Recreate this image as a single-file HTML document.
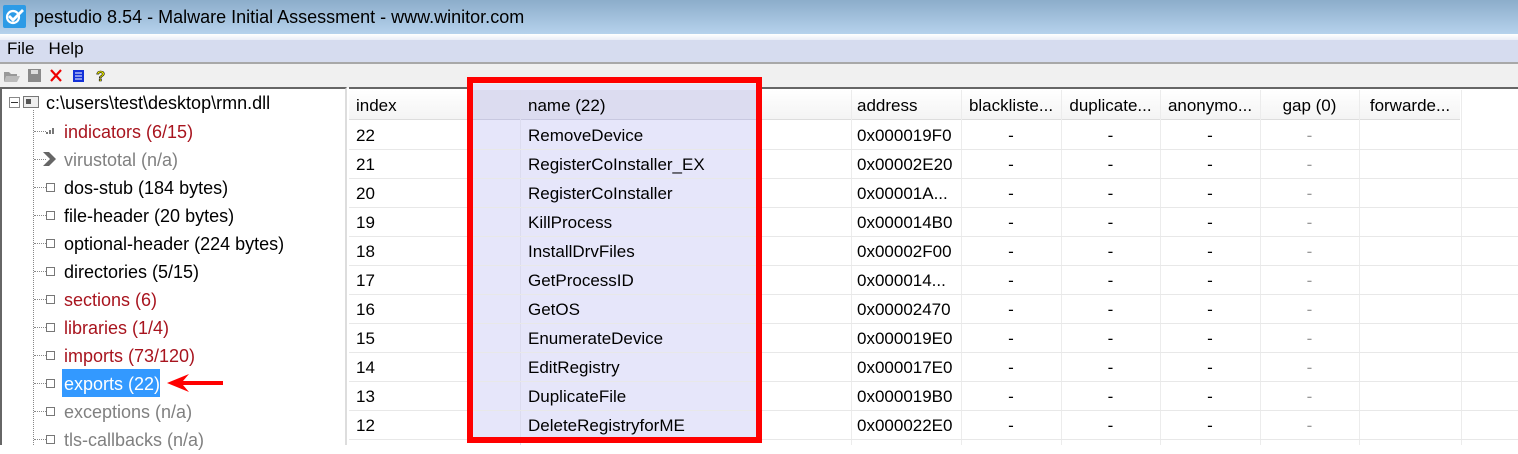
<!DOCTYPE html>
<html><head><meta charset="utf-8"><style>
*{margin:0;padding:0;box-sizing:border-box}
body{width:1518px;height:445px;overflow:hidden;background:#fff;font-family:"Segoe UI","Liberation Sans",sans-serif;font-size:17px;color:#000;position:relative}
.a{position:absolute;white-space:nowrap}
#title{left:0;top:0;width:1518px;height:34px;background:linear-gradient(#8cadca,#b6d2ec)}
#strip{left:0;top:34px;width:1518px;height:8px;background:linear-gradient(#fff,#e4e8f5)}
#menu{left:0;top:40px;width:1518px;height:22px;background:#d6dcef}
#tb{left:0;top:62px;width:1518px;height:26px;background:#f0f0f0;border-top:2px solid #a8a8a8}
#tree{left:0;top:87px;width:347px;height:358px;border-top:2px solid #666;border-left:2px solid #666;border-right:2px solid #ddd;background:#fff}
#tablebg{left:349px;top:87px;width:1169px;height:358px;border-top:2px solid #666;background:#fff}
.hl{left:349px;width:1169px;height:1px;background:#e8e8e8}
.vl{width:1px;background:#ececec}
.ti{left:64px;line-height:28px;font-size:18px}
.red{color:#a8141e}.gray{color:#808080}
.bx{left:46px;width:9px;height:9px;border:1px solid #777;background:#fff}
.dot{left:34px;width:12px;border-top:1px dotted #888}
.c{text-align:center}
</style></head><body>
<div class="a" id="title"></div>
<div class="a" style="left:3px;top:5px;width:23px;height:23px;background:#2d9be6;border-radius:2px"></div>
<svg class="a" style="left:5px;top:8px" width="20" height="17"><circle cx="8" cy="9" r="6" fill="none" stroke="#fff" stroke-width="2.2"/><path d="M4 8 L8 12 L18 2" fill="none" stroke="#fff" stroke-width="2.8"/></svg>
<div class="a" style="left:34px;top:5px;font-size:18px;line-height:24px">pestudio 8.54 - Malware Initial Assessment - www.winitor.com</div>
<div class="a" id="strip"></div>
<div class="a" id="menu"></div>
<div class="a" style="left:7px;top:38px;line-height:22px">File&nbsp;&nbsp; Help</div>
<div class="a" id="tb"></div>
<svg class="a" style="left:3px;top:67px" width="110" height="16">
<path d="M1 5h5l2 2h6v7H1z" fill="#999"/><path d="M3 9h14l-3 6H1z" fill="#bbb"/>
<rect x="25" y="2" width="13" height="13" fill="#8a8a8a"/><rect x="28" y="3" width="7" height="4" fill="#ddd"/>
<path d="M48 3l10 11M58 3l-10 11" stroke="#e00" stroke-width="2.2"/>
<rect x="70" y="3" width="11" height="12" fill="#1330d8"/><path d="M72 6h7M72 9h7M72 12h7" stroke="#fff" stroke-width="1"/>
<text x="93" y="14" font-size="15" font-weight="bold" fill="#ee0" stroke="#000" stroke-width=".6">?</text>
</svg>
<div class="a" id="tree"></div>
<div class="a" style="left:9px;top:97px;width:11px;height:11px;border:1px solid #888;background:#fff"></div>
<div class="a" style="left:11px;top:102px;width:7px;height:1px;background:#333"></div>
<div class="a" style="left:23px;top:96px;width:16px;height:12px;border:1px solid #777;background:#eee"></div>
<div class="a" style="left:26px;top:99px;width:5px;height:5px;background:#555"></div>
<div class="a" style="left:46px;top:89px;line-height:28px;font-size:18px">c:\users\test\desktop\rmn.dll</div>
<div class="a" style="left:33px;top:110px;height:335px;border-left:1px dotted #888"></div>
<div class="a dot" style="top:131px"></div><svg class="a" style="left:46px;top:125px" width="10" height="10"><rect x="0" y="7" width="2" height="2" fill="#777"/><rect x="3" y="5" width="2" height="4" fill="#777"/><rect x="6" y="3" width="2" height="6" fill="#777"/></svg>
<div class="a ti red" style="top:118px">indicators (6/15)</div>
<div class="a dot" style="top:159px"></div><svg class="a" style="left:43px;top:152px" width="16" height="14"><path d="M0 0h6l7 7-7 7H0l7-7z" fill="#666"/></svg>
<div class="a ti gray" style="top:146px">virustotal (n/a)</div>
<div class="a dot" style="top:187px"></div><div class="a bx" style="top:183px"></div><div class="a ti" style="top:174px">dos-stub (184 bytes)</div>
<div class="a dot" style="top:215px"></div><div class="a bx" style="top:211px"></div><div class="a ti" style="top:202px">file-header (20 bytes)</div>
<div class="a dot" style="top:243px"></div><div class="a bx" style="top:239px"></div><div class="a ti" style="top:230px">optional-header (224 bytes)</div>
<div class="a dot" style="top:271px"></div><div class="a bx" style="top:267px"></div><div class="a ti" style="top:258px">directories (5/15)</div>
<div class="a dot" style="top:299px"></div><div class="a bx" style="top:295px"></div><div class="a ti red" style="top:286px">sections (6)</div>
<div class="a dot" style="top:327px"></div><div class="a bx" style="top:323px"></div><div class="a ti red" style="top:314px">libraries (1/4)</div>
<div class="a dot" style="top:355px"></div><div class="a bx" style="top:351px"></div><div class="a ti red" style="top:342px">imports (73/120)</div>
<div class="a dot" style="top:383px"></div><div class="a bx" style="top:379px"></div><div class="a" style="left:62px;top:369px;width:98px;height:28px;background:#3399ff"></div><div class="a ti" style="top:370px;color:#fff">exports (22)</div>
<svg class="a" style="left:165px;top:372px" width="62" height="22"><path d="M2 11 L24 2 L18 9 L58 9 L58 13 L18 13 L24 20Z" fill="#f00"/></svg>
<div class="a dot" style="top:411px"></div><div class="a bx" style="top:407px"></div><div class="a ti gray" style="top:398px">exceptions (n/a)</div>
<div class="a dot" style="top:439px"></div><div class="a bx" style="top:435px"></div><div class="a ti gray" style="top:426px">tls-callbacks (n/a)</div>

<div class="a" id="tablebg"></div>
<div class="a" style="left:349px;top:90px;width:1111px;height:30px;background:linear-gradient(#fff,#f4f4f4);border-bottom:1px solid #ddd"></div>
<div class="a" style="left:473px;top:84px;width:283px;height:355px;background:#e6e6fa"></div>
<div class="a" style="left:473px;top:90px;width:283px;height:30px;background:#dcdcf0;border-bottom:1px solid #c8c8e0"></div>
<div id="grid"></div>
<div class="a" style="left:467px;top:77px;width:295px;height:366px;border:6px solid #f00"></div>
<script>
var g=document.getElementById('grid'),h='';
var vx=[520,851,961,1061,1160,1260,1359,1461];
vx.forEach(function(x){h+='<div class="a vl" style="left:'+x+'px;top:90px;height:355px;'+(x==520?'background:#dcdcef':'')+'"></div>'});
var hd=[['index',356],['name (22)',528],['address',857]];
hd.forEach(function(d){h+='<div class="a" style="left:'+d[1]+'px;top:91px;line-height:30px">'+d[0]+'</div>'});
var hc=['blackliste...','duplicate...','anonymo...','gap (0)','forwarde...'];
hc.forEach(function(t,i){h+='<div class="a c" style="left:'+vx[i+2]+'px;width:'+(vx[i+3]-vx[i+2])+'px;top:91px;line-height:30px">'+t+'</div>'});
var rows=[[22,'RemoveDevice','0x000019F0'],[21,'RegisterCoInstaller_EX','0x00002E20'],[20,'RegisterCoInstaller','0x00001A...'],[19,'KillProcess','0x000014B0'],[18,'InstallDrvFiles','0x00002F00'],[17,'GetProcessID','0x000014...'],[16,'GetOS','0x00002470'],[15,'EnumerateDevice','0x000019E0'],[14,'EditRegistry','0x000017E0'],[13,'DuplicateFile','0x000019B0'],[12,'DeleteRegistryforME','0x000022E0']];
rows.forEach(function(r,i){var y=121+29*i;
h+='<div class="a hl" style="top:'+(y+28)+'px"></div>';
h+='<div class="a" style="left:356px;top:'+y+'px;line-height:29px">'+r[0]+'</div>';
h+='<div class="a" style="left:528px;top:'+y+'px;line-height:29px;color:#000">'+r[1]+'</div>';
h+='<div class="a" style="left:857px;top:'+y+'px;line-height:29px">'+r[2]+'</div>';
for(var k=0;k<4;k++)h+='<div class="a c" style="left:'+vx[k+2]+'px;width:'+(vx[k+3]-vx[k+2])+'px;top:'+y+'px;line-height:29px;'+(k==3?'color:#999':'')+'">-</div>';
});
g.innerHTML=h;
</script>
</body></html>
